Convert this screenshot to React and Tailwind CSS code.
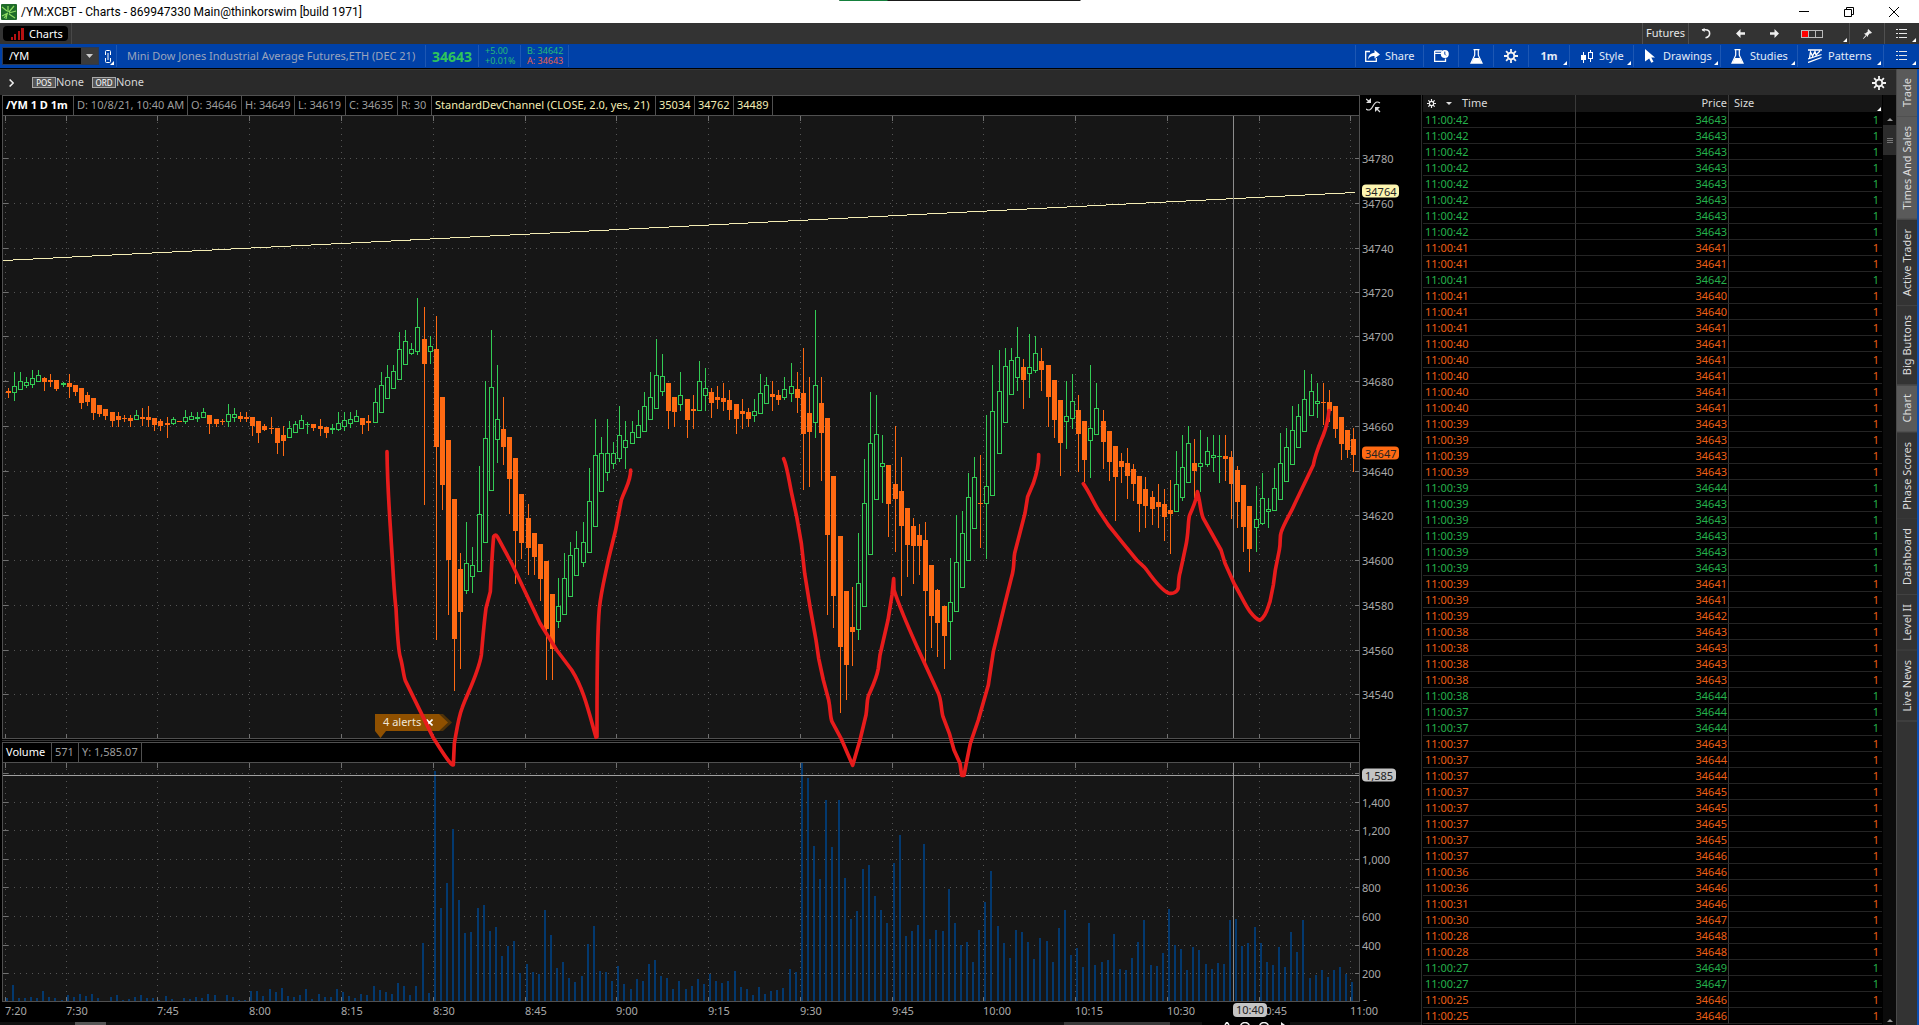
import React from 'react';

// [high, body top, body bottom, low, up?] in thirds of a pixel, measured from y = 280
const CANDLES = [
  [323,333,339,353,0],[277,318,339,364,1],[277,303,329,329,1],[291,306,318,325,1],[270,294,315,325,1],
  [270,285,305,305,1],[291,294,306,333,0],[282,300,306,320,0],[300,300,327,333,0],[305,309,315,320,1],
  [282,309,321,353,0],[315,315,336,347,0],[324,324,369,386,0],[336,345,366,379,0],[354,354,399,419,0],
  [375,375,402,412,0],[387,387,408,419,0],[396,396,423,440,0],[397,408,420,440,0],[405,414,417,425,0],
  [405,414,423,440,0],[390,405,420,420,1],[384,411,417,438,0],[378,411,420,440,0],[414,414,435,452,0],
  [417,423,438,452,0],[411,429,435,473,0],[411,417,432,434,1],[423,423,426,426,0],[390,411,426,433,1],
  [397,408,420,420,1],[397,411,416,425,1],[384,396,413,413,1],[405,405,432,461,0],[417,417,432,440,0],
  [417,423,426,434,0],[372,402,426,440,1],[384,402,413,425,1],[397,408,417,425,0],[397,411,417,425,0],
  [411,411,438,467,0],[423,423,459,488,0],[432,438,450,452,0],[411,444,447,461,0],[444,444,489,521,0],
  [438,465,483,527,0],[423,444,474,474,1],[423,432,458,458,1],[405,420,447,447,1],[425,432,435,461,1],
  [432,432,444,452,0],[417,438,447,467,0],[441,441,459,473,0],[433,444,450,461,1],[397,429,450,452,1],
  [397,420,440,452,1],[397,417,431,445,1],[390,408,426,426,1],[414,414,435,461,0],[405,423,429,452,0],
  [324,366,429,429,1],[277,315,399,399,1],[255,291,357,357,1],[255,273,326,326,1],[156,207,300,300,1],
  [150,183,255,255,1],[189,207,221,224,1],[54,141,216,224,1],[81,177,252,675,0],[168,198,216,251,1],
  [108,207,501,1079,0],[351,351,615,689,0],[480,480,840,1004,0],[657,657,1077,1232,0],[820,867,996,1166,0],
  [726,849,934,943,1],[801,855,891,938,1],[558,702,876,876,1],[303,474,789,789,1],[150,321,633,633,1],
  [255,417,480,548,1],[351,447,501,554,0],[471,471,597,701,0],[534,534,753,911,0],[642,642,789,836,0],
  [672,714,804,884,0],[759,759,831,884,0],[792,792,897,962,0],[843,843,1047,1199,0],[942,942,1107,1199,0],
  [894,978,1026,1043,1],[820,894,1004,1004,1],[786,825,950,950,1],[753,804,887,887,1],[726,786,849,862,1],
  [564,663,819,819,1],[417,525,741,741,1],[471,519,636,636,1],[417,519,578,602,1],[486,519,551,566,1],
  [378,465,537,547,1],[423,480,503,566,1],[423,456,492,492,1],[390,435,473,473,1],[336,378,456,456,1],
  [277,351,419,419,1],[177,285,386,386,1],[222,288,335,347,1],[309,309,393,446,0],[351,351,396,440,0],
  [277,345,375,392,1],[357,357,420,473,0],[345,387,393,446,0],[243,303,392,392,1],[264,324,348,392,1],
  [324,336,369,413,0],[318,351,360,386,0],[309,354,366,392,0],[330,360,390,419,0],[372,372,417,461,0],
  [357,393,402,446,0],[384,396,417,440,0],[357,393,407,425,1],[282,339,402,402,1],[291,315,371,371,1],
  [303,342,351,392,0],[330,345,360,375,0],[291,327,353,359,1],[249,318,341,365,1],[276,327,354,398,0],
  [204,339,462,629,0],[291,399,456,621,0],[90,315,429,473,1],[291,369,459,602,0],[414,414,765,1004,0],
  [588,588,948,1043,0],[768,768,1101,1298,0],[933,933,1155,1259,0],[921,1041,1056,1157,0],[759,909,1049,1079,1],
  [537,669,980,980,1],[336,489,825,825,1],[345,462,659,659,1],[465,549,560,668,1],[555,555,672,770,0],
  [438,612,657,815,0],[531,633,738,949,0],[684,684,795,890,0],[714,738,798,911,0],[732,765,798,884,0],
  [726,780,933,1145,0],[855,855,1008,1103,0],[927,930,1029,1130,0],[978,978,1068,1166,0],[834,966,1026,1139,1],
  [705,846,996,996,1],[693,759,923,923,1],[579,651,842,842,1],[531,591,746,746,1],[525,669,672,803,0],
  [405,618,671,836,1],[255,393,648,648,1],[210,333,521,521,1],[204,258,429,429,1],[204,240,344,344,1],
  [141,231,293,332,1],[237,261,300,386,0],[162,261,282,353,1],[168,219,272,278,1],[204,243,270,332,0],
  [255,255,351,440,0],[300,300,420,473,0],[360,360,489,587,0],[303,408,426,506,1],[282,363,416,446,1],
  [345,390,462,575,0],[423,423,540,606,0],[255,444,482,593,1],[309,384,465,465,1],[390,423,486,566,0],
  [453,453,546,602,0],[498,498,591,722,0],[519,543,561,608,0],[504,549,588,656,0],[552,567,612,662,0],
  [588,588,672,755,0],[591,627,678,743,0],[633,651,687,734,0],[612,666,681,743,0],[627,672,711,782,0],
  [600,690,702,821,0],[513,612,695,695,1],[465,561,654,662,1],[438,489,608,608,1],[477,549,573,654,0],
  [450,549,560,635,1],[471,513,554,560,1],[465,525,533,575,1],[465,528,530,608,1],[465,528,537,602,0],
  [513,531,612,716,0],[558,570,666,743,0],[615,615,741,815,0],[678,678,807,875,0],[618,717,744,815,1],
  [579,654,731,734,1],[654,687,695,743,1],[564,624,692,692,1],[459,549,659,659,1],[444,501,605,605,1],
  [378,450,554,554,1],[372,408,503,503,1],[270,357,455,455,1],[282,333,407,407,1],[309,363,371,413,1],
  [309,366,369,434,0],[330,366,393,425,0],[378,378,447,473,0],[411,411,492,539,0],[450,450,510,533,0],
  [444,477,525,575,0],
];

// top edge of every volume bar, thirds of a pixel from y = 720 (the base line is at 845)
const VOLUME = [
  834,795,834,834,831,834,813,831,834,840,825,831,822,828,822,834,843,831,825,840,837,831,825,834,834,840,828,837,
  843,834,837,831,834,822,825,843,825,831,840,840,813,813,828,807,816,804,828,831,825,807,837,822,831,831,807,816,
  828,834,822,825,798,810,816,822,789,798,825,798,669,819,153,564,489,327,540,639,636,564,555,633,621,708,678,663,
  759,732,756,762,570,645,744,726,774,786,768,672,618,753,756,783,738,792,807,777,783,732,720,768,774,807,783,807,
  798,777,792,762,783,789,783,753,801,807,825,801,822,813,810,804,747,756,129,174,378,477,240,381,240,474,597,573,
  447,435,528,570,609,429,345,648,633,615,372,657,630,633,507,609,675,666,726,630,546,453,618,669,714,630,636,666,
  717,654,663,726,624,570,705,684,741,609,735,726,720,642,747,750,714,666,600,735,738,699,567,675,687,750,681,690,
  732,747,729,732,600,597,678,669,621,669,726,735,681,741,636,696,600,774,765,750,771,750,741,762,786,
];

const GRID_X = [5, 66, 157, 249, 341, 433, 525, 616, 708, 800, 892, 983, 1075, 1167, 1259, 1350];
const TIMES = ['7:20', '7:30', '7:45', '8:00', '8:15', '8:30', '8:45', '9:00', '9:15', '9:30', '9:45', '10:00', '10:15', '10:30', '10:45', '11:00'];
const PRICES = [
  [34780, 158], [34760, 203], [34740, 248], [34720, 292], [34700, 336], [34680, 381], [34660, 426],
  [34640, 471], [34620, 515], [34600, 560], [34580, 605], [34560, 650], [34540, 694],
];
const VOLUMES = [
  ['', 773], ['1,400', 802], ['1,200', 830], ['1,000', 859], ['800', 887], ['600', 916], ['400', 945], ['200', 973],
];

// runs of identical prints: [seconds, price, up?, count]
const PRINTS = [
  [42, 34643, 1, 8], [41, 34641, 0, 2], [41, 34642, 1, 1], [41, 34640, 0, 2], [41, 34641, 0, 1], [40, 34641, 0, 5],
  [39, 34643, 0, 4], [39, 34644, 1, 1], [39, 34643, 1, 5], [39, 34641, 0, 2], [39, 34642, 0, 1], [38, 34643, 0, 4],
  [38, 34644, 1, 1], [37, 34644, 1, 2], [37, 34643, 0, 1], [37, 34644, 0, 2], [37, 34645, 0, 4], [37, 34646, 0, 1],
  [36, 34646, 0, 2], [31, 34646, 0, 1], [30, 34647, 0, 1], [28, 34648, 0, 2], [27, 34649, 1, 1], [27, 34647, 1, 1],
  [25, 34646, 0, 2],
];
const ROWS = PRINTS.flatMap(([s, price, up, n]) => Array.from({ length: n }, () => ({ time: `11:00:${s}`, price, up })));

const SIDE_TABS = [
  ['Trade', true], ['Times And Sales', true], ['Active Trader', false], ['Big Buttons', false], ['Chart', true],
  ['Phase Scores', false], ['Dashboard', false], ['Level II', false], ['Live News', false],
];

const barX = (i) => Math.floor(8 + (i * 104) / 17);
const candleY = (v) => Math.round(280 + v / 3);

const Corner = ({ className = '' }) => (
  <svg className={`absolute w-[4px] h-[4px] ${className}`} viewBox="0 0 4 4" aria-hidden="true">
    <path d="M4 0V4H0Z" fill="#fff" />
  </svg>
);

const Gear = ({ size = 'w-[14px] h-[14px]' }) => (
  <svg className={size} viewBox="0 0 14 14" fill="none" stroke="#f2f2f2" aria-hidden="true">
    <circle cx="7" cy="7" r="3.3" strokeWidth="1.8" />
    <path d="M7 0V3M7 11V14M0 7H3M11 7H14M2.1 2.1L4.3 4.3M9.7 9.7L11.9 11.9M2.1 11.9L4.3 9.7M9.7 4.3L11.9 2.1" strokeWidth="1.8" />
  </svg>
);

const Flask = () => (
  <svg className="w-[13px] h-[15px]" viewBox="0 0 13 15" aria-hidden="true">
    <path d="M3.5 .6H9.5M4.7 .6V6.2L.9 14.2H12.1L8.3 6.2V.6" fill="none" stroke="#fff" strokeWidth="1.2" />
    <path d="M3.8 9H9.2L11.6 14H1.4Z" fill="#fff" />
  </svg>
);

const ListIcon = () => (
  <svg className="w-[11px] h-[10px]" viewBox="0 0 11 10" fill="#e8e8e8" shapeRendering="crispEdges" aria-hidden="true">
    <path d="M0 0H2V1H0ZM3 0H11V1H3ZM0 4H2V5H0ZM3 4H11V5H3ZM0 8H2V9H0ZM3 8H11V9H3Z" />
  </svg>
);

const TitleBar = () => (
  <header className="relative flex h-[23px] shrink-0 items-center justify-between bg-white pl-px text-black">
    <div className="flex items-center gap-[4px]">
      <svg className="w-[16px] h-[16px]" viewBox="0 0 16 16" aria-hidden="true">
        <rect width="16" height="16" rx="1" fill="#1f6b2a" />
        <path d="M1 3L6 7M7 8V2M8 8L13 2M8 9L15 7M7 9L1 12M6 10L5 15M8 10L14 14M7 9L3 14" stroke="#8fdc62" strokeWidth="1.2" fill="none" />
      </svg>
      <h1 className="text-[12px] leading-4 font-['Roboto',sans-serif]">/YM:XCBT - Charts - 869947330 Main@thinkorswim [build 1971]</h1>
    </div>
    <div className="absolute left-1/2 top-0 flex h-px w-[241px] -translate-x-1/2 bg-[#1a1a1a]">
      <span className="w-[48px] bg-[#15803d]" />
    </div>
    <div className="flex h-full pr-[3px]">
      <button aria-label="Minimize" className="flex w-[45px] items-center justify-center">
        <svg className="w-[10px] h-[10px]" viewBox="0 0 10 10"><path d="M0 4.5H10" stroke="#000" /></svg>
      </button>
      <button aria-label="Restore" className="flex w-[45px] items-center justify-center">
        <svg className="w-[10px] h-[10px]" viewBox="0 0 10 10" fill="none" stroke="#000"><path d="M.5 2.5H7.5V9.5H.5ZM2.5 2.5V.5H9.5V7.5H7.5" /></svg>
      </button>
      <button aria-label="Close" className="flex w-[45px] items-center justify-center">
        <svg className="w-[10px] h-[10px]" viewBox="0 0 10 10"><path d="M0 0L10 10M10 0L0 10" stroke="#000" /></svg>
      </button>
    </div>
  </header>
);

const TabBar = () => (
  <nav className="flex h-[21px] shrink-0 justify-between bg-[#333]">
    <div className="flex items-center border-r border-[#484848] px-[3px]">
      <button className="flex h-[15px] w-[65px] items-center gap-[5px] rounded bg-black pl-[8px] text-[11px] leading-[15px] text-white">
        <svg className="w-[13px] h-[12px]" viewBox="0 0 13 12" fill="#b51212" aria-hidden="true">
          <path d="M0 9H2V12H0ZM3 6H5V12H3ZM7 3H9V12H7ZM10 0H13V12H10Z" />
        </svg>
        Charts
      </button>
    </div>
    <div className="flex pr-px">
      <button className="w-[46px] border-l border-[#505050] text-[11px] text-[#e6e6e6]">Futures</button>
      <div className="relative flex w-[161px] items-center border-l border-[#505050]">
        <button aria-label="Undo" className="flex w-[34px] justify-center">
          <svg className="w-[10px] h-[11px]" viewBox="0 0 10 11" fill="none" stroke="#eee" strokeWidth="1.6"><path d="M1 1.8H4.5C10 2 10 8.5 4.5 9.8" /><path d="M3.6 0V4L.6 1.8Z" fill="#eee" stroke="none" /></svg>
        </button>
        <button aria-label="Back" className="flex w-[34px] justify-center">
          <svg className="w-[9px] h-[9px]" viewBox="0 0 9 9" fill="#eee"><path d="M0 4.5L4.5 0V3.2H9V5.8H4.5V9Z" /></svg>
        </button>
        <button aria-label="Forward" className="flex w-[34px] justify-center">
          <svg className="w-[9px] h-[9px]" viewBox="0 0 9 9" fill="#eee"><path d="M9 4.5L4.5 0V3.2H0V5.8H4.5V9Z" /></svg>
        </button>
        <svg className="ml-[10px] w-[22px] h-[8px]" viewBox="0 0 22 8" shapeRendering="crispEdges" aria-hidden="true">
          <rect width="22" height="8" fill="#bbb" /><rect x="1" y="1" width="6" height="6" fill="#f00" />
          <rect x="8" y="1" width="6" height="6" fill="#333" /><rect x="15" y="1" width="6" height="6" fill="#333" />
        </svg>
        <Corner className="right-[2px] bottom-[2px]" />
      </div>
      <button aria-label="Pin" className="flex w-[35px] items-center justify-center border-l border-[#505050]">
        <svg className="w-[9px] h-[10px]" viewBox="0 0 9 10" fill="#eee"><path d="M5.2 0L9 3.8 7.8 4.6 6.6 4.4 5 6.6 5 8 1 4.4 2.6 4.2 4.8 2.4 4.6 1.2ZM2.6 6.2L3.4 7 .4 10 0 9.4Z" /></svg>
      </button>
      <button aria-label="Menu" className="relative flex w-[34px] items-center justify-center border-l border-[#505050]"><ListIcon /><Corner className="right-[2px] bottom-[2px]" /></button>
    </div>
  </nav>
);

const Tool = ({ className, label, corner, children }) => (
  <button aria-label={label} className={`relative flex items-center border-l border-[#1d57b3] text-[11px] text-[#e4ebf7] ${className}`}>
    {children}
    {corner && <Corner className="right-[2px] bottom-[2px]" />}
  </button>
);

const SymbolBar = () => (
  <div className="flex h-[25px] shrink-0 justify-between border-b border-black bg-[#0041a8] py-px">
    <div className="flex">
      <div className="my-[2px] ml-[2px] flex w-[97px] items-center border border-[#2c3950] bg-black">
        <input aria-label="Symbol" defaultValue="/YM" className="w-0 flex-1 bg-black pl-[6px] text-[11px] text-white outline-none" />
        <button aria-label="Recent symbols" className="flex h-full w-[17px] items-center justify-center bg-[#3b3b3b]">
          <svg className="w-[7px] h-[4px]" viewBox="0 0 7 4"><path d="M0 0H7L3.5 4Z" fill="#ccc" /></svg>
        </button>
      </div>
      <button aria-label="Link" className="relative flex w-[17px] items-center justify-center">
        <svg className="w-[6px] h-[13px]" viewBox="0 0 6 13" fill="none" stroke="#fff" strokeWidth="1"><path d="M.5 5V1.5Q.5 .5 1.5 .5H4.5Q5.5 .5 5.5 1.5V5M.5 8V11.5Q.5 12.5 1.5 12.5H4.5Q5.5 12.5 5.5 11.5V8M3 3V10" /></svg>
        <Corner className="right-[2px] bottom-[2px]" />
      </button>
      <span className="flex w-[309px] items-center border-l border-[#1d57b3] pl-[10px] text-[11px] whitespace-nowrap text-[#9aa4bd]">Mini Dow Jones Industrial Average Futures,ETH (DEC 21)</span>
      <span className="flex w-[53px] items-center border-l border-[#1d57b3] pl-[6px] text-[14px] font-bold text-[#2fc45c]">34643</span>
      <span className="flex w-[42px] flex-col justify-center border-l border-[#1d57b3] pl-[6px] text-[9px] leading-[10px] text-[#27b978]"><span>+5.00</span><span>+0.01%</span></span>
      <span className="flex w-[49px] flex-col justify-center border-x border-[#1d57b3] pl-[6px] text-[9px] leading-[10px] whitespace-nowrap text-[#27b978]"><span>B: 34642</span><span className="text-[#e8604c]">A: 34643</span></span>
    </div>
    <div className="flex pr-px">
      <Tool className="w-[68px] gap-[5px] pl-[9px]">
        <svg className="w-[15px] h-[12px]" viewBox="0 0 15 12" aria-hidden="true"><path d="M5 1.5H.7V11.3H11.3V8" fill="none" stroke="#fff" strokeWidth="1.3" /><path d="M9.5 0L15 4.4 9.5 8.6V6C6 5.8 4.5 7 3 9.5 3.3 5.5 5.5 3 9.5 2.7Z" fill="#fff" /></svg>
        Share
      </Tool>
      <Tool className="w-[35px] justify-center" label="News">
        <svg className="w-[15px] h-[12px]" viewBox="0 0 15 12"><path d="M.6 1H8M.6 1V11.3H11.5V8.5M.6 3.3H7" fill="none" stroke="#fff" strokeWidth="1.3" /><circle cx="10.8" cy="4" r="4" fill="#fff" /><path d="M10.8 1.6V4.2L12 5.4" fill="none" stroke="#0041a8" /></svg>
      </Tool>
      <Tool className="w-[35px] justify-center" label="Edit studies"><Flask /></Tool>
      <Tool className="w-[35px] justify-center" label="Settings"><Gear /></Tool>
      <Tool className="w-[41px] justify-center font-bold" corner>1m</Tool>
      <Tool className="w-[64px] gap-[6px] pl-[11px]" corner>
        <svg className="w-[12px] h-[13px]" viewBox="0 0 12 13" aria-hidden="true"><path d="M2.5 2V13M9.5 0V2M9.5 9V12" stroke="#fff" /><rect y="5" width="5" height="5" fill="#fff" /><rect x="7.5" y="2.5" width="4" height="6" fill="none" stroke="#fff" /></svg>
        Style
      </Tool>
      <Tool className="w-[87px] gap-[8px] pl-[11px]" corner>
        <svg className="w-[10px] h-[14px]" viewBox="0 0 10 14" aria-hidden="true"><path d="M0 0L10 8.6H6.3L8.5 12.8 6.3 13.8 4.2 9.5 0 12.4Z" fill="#fff" /></svg>
        Drawings
      </Tool>
      <Tool className="w-[77px] gap-[6px] pl-[10px]" corner><Flask />Studies</Tool>
      <Tool className="w-[86px] gap-[6px] pl-[10px]" corner>
        <svg className="w-[14px] h-[14px]" viewBox="0 0 14 14" fill="none" stroke="#fff" strokeWidth="1.3" aria-hidden="true"><path d="M0 1H14M0 10L13.5 5.5M0 13.5L13.5 8.5M1.5 9L2.5 3 4.5 7 7 2.5 8 6 12 2" /></svg>
        Patterns
      </Tool>
      <Tool className="w-[35px] justify-center" label="Menu" corner><ListIcon /></Tool>
    </div>
  </div>
);

const InfoCell = ({ className = '', children }) => (
  <span className={`flex shrink-0 items-center border-r border-[#505050] pl-[3px] whitespace-nowrap ${className}`}>{children}</span>
);

const Grid = ({ ys, top, bottom }) => (
  <g stroke="#555" shapeRendering="crispEdges">
    {GRID_X.map((x) => <path key={x} d={`M${x + 0.5} ${top}V${bottom}`} strokeDasharray="1 5" />)}
    {ys.map((y) => <path key={y} d={`M8 ${y + 0.5}H1354`} strokeDasharray="1 5" />)}
    {GRID_X.map((x) => <path key={x} d={`M${x + 0.5} ${top}V${top + 5}M${x + 0.5} ${bottom - 4}V${bottom}`} stroke="#707070" />)}
    {ys.map((y) => <path key={y} d={`M3 ${y + 0.5}H8M1355 ${y + 0.5}H1359`} stroke="#707070" />)}
  </g>
);

const Candle = ({ data: [h, t, b, l, up], i }) => {
  const x = barX(i);
  const top = candleY(t);
  const height = Math.max(1, candleY(b) - top);
  const color = up ? '#33cc55' : '#ff6a13';
  return (
    <g>
      <rect x={x} y={candleY(h)} width="1" height={Math.max(1, candleY(l) - candleY(h))} fill={color} />
      {up && height > 2
        ? <rect x={x - 1.5} y={top + 0.5} width="4" height={height - 1} fill="#161616" stroke={color} />
        : <rect x={x - 2} y={top} width="5" height={height} fill={color} />}
    </g>
  );
};

const PricePlot = () => (
  <svg className="absolute inset-0 h-full w-full" viewBox="3 116 1356 622" preserveAspectRatio="none" role="img" aria-label="Price chart">
    <Grid ys={PRICES.map(([, y]) => y)} top={116} bottom={738} />
    <g shapeRendering="crispEdges">
      <path d="M3 260.5L1355 192.5" stroke="#f3ecb4" fill="none" />
      {CANDLES.map((c, i) => <Candle key={i} data={c} i={i} />)}
      <rect x="1233" y="116" width="1" height="622" fill="#8c8c8c" />
    </g>
  </svg>
);

const VolumePlot = () => (
  <svg className="absolute inset-0 h-full w-full" viewBox="3 763 1356 238" preserveAspectRatio="none" role="img" aria-label="Volume chart">
    <Grid ys={VOLUMES.map(([, y]) => y)} top={763} bottom={1001} />
    <g shapeRendering="crispEdges">
      {VOLUME.map((v, i) => <rect key={i} x={barX(i) - 2} y={Math.round(720 + v / 3)} width="2" height={Math.round((845 - v) / 3)} fill="#03396f" />)}
      <rect x="1233" y="763" width="1" height="238" fill="#8c8c8c" />
      <rect x="3" y="775" width="1356" height="1" fill="#a0a0a0" />
    </g>
  </svg>
);

const HandDrawing = () => (
  <svg className="pointer-events-none absolute inset-0 h-full w-full" viewBox="0 95 1360 907" preserveAspectRatio="none" aria-hidden="true">
    <g fill="none" stroke="#e81c1c" strokeWidth="11" strokeLinecap="round" strokeLinejoin="round">
      <path transform="translate(370 280) scale(.33333)" d="M51 515C52 620 60 720 64 790C70 880 72 940 78 985C82 1060 84 1110 91 1132C98 1155 100 1185 106 1202L150 1292L188 1370C210 1405 230 1440 247 1455H250L253 1390C262 1340 266 1310 276 1285C292 1240 325 1180 334 1125C338 1080 342 1030 348 985L361 935C364 880 366 820 371 770C374 764 378 764 382 770L425 850L470 945L510 1030L560 1110L605 1170C640 1225 655 1290 678 1372L681 1370C681 1250 680 1080 688 985C694 930 705 890 716 835L737 750L754 660C768 620 782 605 782 570" />
      <path transform="translate(760 280) scale(.33333)" d="M71 536C82 560 88 610 96 645L110 710L124 790L134 880L150 980L168 1080L176 1135L190 1200L206 1260C212 1290 210 1310 216 1325L243 1375L278 1456L300 1380L318 1305C322 1280 320 1265 325 1248C335 1225 350 1195 355 1165L360 1125L384 1020L396 945L401 896L402 930C425 1000 460 1075 480 1120L535 1240C545 1262 543 1290 549 1310L568 1360L582 1410L600 1450L605 1486H612L620 1445L631 1390L655 1320L685 1215L700 1115L735 970L755 890C764 860 760 840 764 820L795 700L803 650L820 610C832 575 837 550 836 524" />
      <path transform="translate(1040 300) scale(.33333)" d="M130 551C150 580 162 610 175 630L205 675L245 725L290 780C305 795 312 798 320 810C345 845 365 870 385 879C400 884 414 874 415 862C416 840 416 830 421 815L437 740C446 700 443 675 448 648C456 625 468 610 472 575C480 600 482 640 490 655L543 750L555 790L583 852C605 890 615 915 630 935C640 948 650 958 659 961C680 950 685 915 690 905L700 855L706 810L718 750C723 725 718 710 724 695C735 665 752 640 765 610L820 495C826 460 840 430 850 405C860 380 864 360 867 332" />
    </g>
  </svg>
);

// axis labels are free-floating, placed by their share of the pane height
const AxisLabel = ({ y, from, span, className = '', children }) => (
  <span className={`absolute left-[2px] -translate-y-1/2 text-[11px] leading-[13px] ${className}`} style={{ top: `${((y - from) / span) * 100}%` }}>{children}</span>
);

const ChartPanel = () => (
  <main className="flex min-w-0 flex-1 flex-col bg-black text-[11px]">
    <div className="relative flex flex-1 flex-col">
      <div className="flex h-[21px] shrink-0">
        <div className="ml-[2px] flex min-w-0 flex-1 overflow-hidden border border-[#505050] text-[#9c9c9c]">
          <InfoCell className="w-[71px] font-bold text-white">/YM 1 D 1m</InfoCell>
          <InfoCell className="w-[114px]">D: 10/8/21, 10:40 AM</InfoCell>
          <InfoCell className="w-[54px]">O: 34646</InfoCell>
          <InfoCell className="w-[53px]">H: 34649</InfoCell>
          <InfoCell className="w-[51px]">L: 34619</InfoCell>
          <InfoCell className="w-[52px]">C: 34635</InfoCell>
          <InfoCell className="w-[34px]">R: 30</InfoCell>
          <InfoCell className="w-[224px] text-[#f3ecb4]">StandardDevChannel (CLOSE, 2.0, yes, 21)</InfoCell>
          <InfoCell className="w-[39px] text-[#f3ecb4]">35034</InfoCell>
          <InfoCell className="w-[39px] text-[#f3ecb4]">34762</InfoCell>
          <InfoCell className="w-[39px] text-[#f3ecb4]">34489</InfoCell>
        </div>
        <div className="flex w-[61px] items-center pl-[6px]">
          <button aria-label="Fit chart">
            <svg className="w-[15px] h-[15px]" viewBox="0 0 15 15" fill="none" stroke="#ddd" strokeWidth="1.2">
              <path d="M0 11C3 13 5 12 7 8S11 3 14 5M0 1L4 4M14 14L10 10" /><path d="M5 0V5H0ZM9 9H14L9 14Z" fill="#ddd" stroke="none" />
            </svg>
          </button>
        </div>
      </div>
      <div className="flex flex-[622]">
        <div className="relative ml-[2px] flex-1 border-x border-[#505050] bg-[#161616]">
          <PricePlot />
        </div>
        <div className="relative w-[61px] text-[#a8a8a8]">
          {PRICES.map(([p, y]) => <AxisLabel key={p} y={y} from={116} span={622}>{p}</AxisLabel>)}
          <AxisLabel y={191} from={116} span={622} className="rounded-sm bg-[#fdf5b0] px-[3px] text-[#222]">34764</AxisLabel>
          <AxisLabel y={453} from={116} span={622} className="rounded-sm bg-[#ff6a13] px-[3px] text-[#222]">34647</AxisLabel>
        </div>
      </div>
      <div className="mr-[61px] ml-[2px] h-[4px] shrink-0 border-t border-[#505050] bg-black pt-px">
        <div className="h-px bg-[#333]" />
      </div>
      <div className="mr-[61px] ml-[2px] flex h-[21px] shrink-0 border border-[#505050] text-[#9c9c9c]">
        <InfoCell className="w-[49px] text-white">Volume</InfoCell>
        <InfoCell className="w-[27px]">571</InfoCell>
        <InfoCell className="w-[63px]">Y: 1,585.07</InfoCell>
      </div>
      <div className="flex flex-[238]">
        <div className="relative ml-[2px] flex-1 border-x border-[#505050] bg-[#161616]">
          <VolumePlot />
        </div>
        <div className="relative w-[61px] overflow-hidden text-[#a8a8a8]">
          {VOLUMES.map(([v, y]) => <AxisLabel key={y} y={y} from={763} span={238}>{v}</AxisLabel>)}
          <AxisLabel y={1003} from={763} span={238}>0</AxisLabel>
          <AxisLabel y={775} from={763} span={238} className="rounded-sm bg-[#c4c4c4] px-[3px] text-[#222]">1,585</AxisLabel>
        </div>
      </div>
      <div className="mr-[61px] ml-[2px] h-px shrink-0 bg-[#505050]" />
      <button className="absolute top-[619px] left-[375px] flex h-[17px] w-[77px] items-center pl-[8px] text-[11px] text-[#f0e6d8]">
        <svg className="absolute top-0 left-0 h-[24px] w-[77px]" viewBox="0 0 77 24" aria-hidden="true">
          <path d="M64 0H68L77 8.5L68 17H64Z" fill="#4f3208" />
          <path d="M0 0H64L73 8.5L64 17H11L5.5 24L0 17Z" fill="#8f5000" />
        </svg>
        <span className="relative">4 alerts</span>
        <svg className="relative ml-[5px] h-[7px] w-[7px]" viewBox="0 0 7 7" aria-hidden="true"><path d="M.5 .5L6.5 6.5M6.5 .5L.5 6.5" stroke="#fff" strokeWidth="1.6" /></svg>
      </button>
      <div className="pointer-events-none absolute inset-y-0 right-[61px] left-0"><HandDrawing /></div>
    </div>
    <div className="relative h-[20px] shrink-0 mr-[61px] text-[#a8a8a8]">
      {TIMES.map((t, i) => (
        <span key={t} className="absolute top-[2px] text-[11px] leading-[14px]" style={{ left: `${(GRID_X[i] / 1360) * 100}%` }}>{t}</span>
      ))}
      <span className="absolute top-px rounded bg-[#c4c4c4] px-[3px] text-[11px] leading-[14px] text-[#222]" style={{ left: `${(1233 / 1360) * 100}%` }}>10:40</span>
    </div>
    <div className="relative flex h-[3px] shrink-0 items-start overflow-hidden bg-[#101010]">
      <span className="ml-[75px] h-[3px] w-[31px] bg-[#555]" />
      <span className="ml-[958px] h-[3px] w-[106px] bg-[#3a3a3a]" />
      <svg className="ml-[32px] h-[3px] w-[88px] bg-black" viewBox="0 0 88 3" fill="none" stroke="#eee" strokeWidth="1.5" aria-hidden="true">
        <path d="M23 3L25 0L27 3" /><circle cx="43" cy="5" r="4.5" /><circle cx="62" cy="5" r="4.5" /><path d="M79 0L83 3H79Z" fill="#eee" stroke="none" />
      </svg>
    </div>
  </main>
);

const TimesAndSales = () => (
  <section className="flex w-[475px] shrink-0 overflow-hidden border-l border-[#2c2c2c] bg-black pl-px">
    <table className="h-min flex-1 table-fixed border-separate border-spacing-0 text-[11px]">
      <thead>
        <tr className="bg-[#161616] text-[#dadada]">
          <th className="h-[17px] w-[153px] border-r border-[#3a3a3a] p-0 align-top leading-[16px] font-normal">
            <span className="flex items-center pl-[4px]">
              <button aria-label="Columns" className="mr-[10px]"><Gear size="w-[9px] h-[9px]" /></button>
              <svg className="mr-[10px] h-[3px] w-[6px]" viewBox="0 0 6 3" aria-hidden="true"><path d="M0 0H6L3 3Z" fill="#ddd" /></svg>
              Time
            </span>
          </th>
          <th className="w-[153px] border-r border-[#3a3a3a] p-0 pr-px text-right align-top leading-[16px] font-normal">Price</th>
          <th className="relative p-0 pl-[5px] text-left align-top leading-[16px] font-normal">Size<Corner className="right-[1px] bottom-[1px]" /></th>
        </tr>
      </thead>
      <tbody>
        {ROWS.map((r, i) => (
          <tr key={i} className={`leading-[15px] ${r.up ? 'text-[#25b04b]' : 'text-[#ec5f16]'}`}>
            <td className="border-r border-b border-r-[#3a3a3a] border-b-[#242424] p-0 pl-[2px]">{r.time}</td>
            <td className="border-r border-b border-r-[#3a3a3a] border-b-[#242424] p-0 pr-px text-right">{r.price}</td>
            <td className="border-b border-b-[#242424] p-0 pr-[3px] text-right">1</td>
          </tr>
        ))}
      </tbody>
    </table>
    <div className="ml-px flex w-[13px] flex-col justify-between bg-[#0b0b0b]">
      <div className="flex flex-col">
        <span className="flex h-[30px] items-end justify-center bg-[#0b0b0b] pb-[4px]">
          <svg className="h-[3px] w-[6px]" viewBox="0 0 6 3" aria-hidden="true"><path d="M0 3H6L3 0Z" fill="#999" /></svg>
        </span>
        <span className="flex h-[30px] items-center justify-center bg-[#2c2c2c]">
          <svg className="h-[5px] w-[6px]" viewBox="0 0 6 5" shapeRendering="crispEdges" aria-hidden="true"><path d="M0 0H6V1H0ZM0 2H6V3H0ZM0 4H6V5H0Z" fill="#777" /></svg>
        </span>
      </div>
      <span className="flex justify-center pb-[3px]"><svg className="h-[3px] w-[6px]" viewBox="0 0 6 3" aria-hidden="true"><path d="M0 3H6L3 0Z" fill="#999" /></svg></span>
    </div>
  </section>
);

export default function App() {
  return (
    <div className="flex h-screen flex-col overflow-hidden bg-black font-['Noto_Sans',sans-serif]">
      <TitleBar />
      <TabBar />
      <SymbolBar />
      <div className="flex min-h-0 flex-1">
        <div className="flex min-w-0 flex-1 flex-col">
          <div className="flex h-[26px] shrink-0 items-center border-t border-[#3a3a3a] bg-[#2a2a2a] text-[11px] text-[#d6d6d6]">
            <button aria-label="Expand" className="mr-[18px] ml-[9px]">
              <svg className="h-[8px] w-[5px]" viewBox="0 0 5 8" fill="none" stroke="#eee" strokeWidth="1.6"><path d="M.6 .5L4.2 4L.6 7.5" /></svg>
            </button>
            <span className="h-[11px] w-[24px] border border-[#aaa] bg-[#555] text-center text-[8px] leading-[9px] text-white">POS</span>
            <span className="w-[36px]">None</span>
            <span className="h-[11px] w-[24px] border border-[#aaa] bg-[#555] text-center text-[8px] leading-[9px] text-white">ORD</span>
            <span>None</span>
            <button aria-label="Chart settings" className="mr-[10px] ml-auto"><Gear /></button>
          </div>
          <div className="flex min-h-0 flex-1">
            <ChartPanel />
            <TimesAndSales />
          </div>
        </div>
        <aside className="flex w-[23px] shrink-0 flex-col border-r-2 border-l border-r-[#0b4cae] border-l-[#4a4a4a] bg-[#333]">
          {SIDE_TABS.map(([name, active]) => (
            <button key={name} className={`flex rotate-180 items-center justify-center border-t border-[#4a4a4a] pt-[9px] pb-[9px] text-[11px] leading-[20px] text-[#dcdcdc] [writing-mode:vertical-rl] ${active ? 'bg-[#5a5a5a]' : 'bg-[#333]'}`}>
              {name}
            </button>
          ))}
        </aside>
      </div>
    </div>
  );
}
